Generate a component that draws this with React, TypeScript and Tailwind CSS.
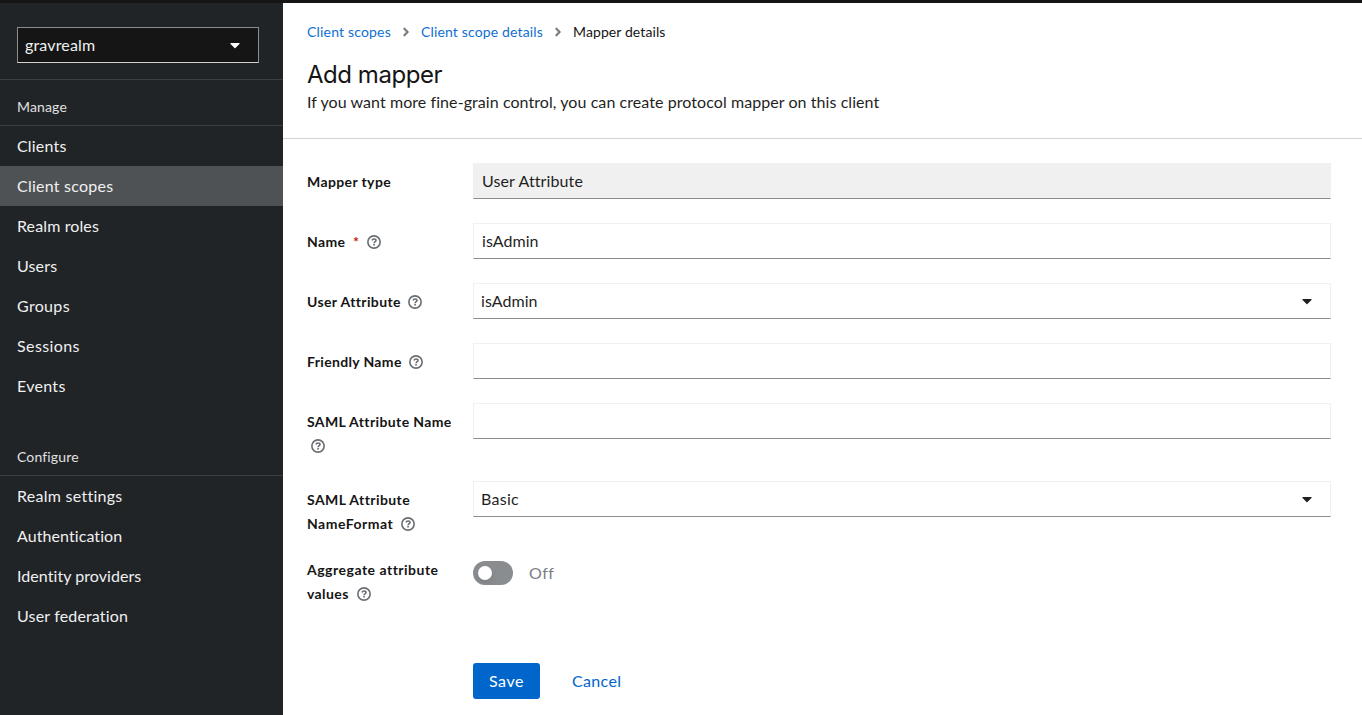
import type { ReactNode } from "react";
import { FaAngleRight, FaCaretDown } from "react-icons/fa";

function HelpIcon({ className = "ml-[7px]" }: { className?: string }) {
  return (
    <svg
      viewBox="0 0 14 14"
      className={`${className} inline-block size-3.5 align-[-2px] text-[#6a6e73]`}
      fill="none"
      stroke="currentColor"
      aria-hidden="true"
    >
      <circle cx="7" cy="7" r="6.15" strokeWidth="1.6" />
      <path d="M5.05 5.5C5.3 4.3 6.1 3.95 7.05 3.95c1.1 0 1.95.6 1.95 1.5 0 1.2-1.75 1.2-1.85 2.5" strokeWidth="1.6" />
      <path d="M6.2 9.65h1.7" strokeWidth="1.7" />
    </svg>
  );
}

function NavHeading({ children, className }: { children: string; className: string }) {
  return (
    <h2
      className={`flex h-[46px] items-start border-b border-[#3c3f42] pt-4 pl-[17px] text-sm leading-[21px] text-[#e0e0e0] ${className}`}
    >
      {children}
    </h2>
  );
}

function NavItem({ children, className, active }: { children: string; className: string; active?: boolean }) {
  return (
    <li
      className={`flex h-10 items-center pl-[17px] text-base leading-6 text-[#f0f0f0] ${active ? "bg-[#4f5255]" : ""} ${className}`}
    >
      <span className="pb-px">{children}</span>
    </li>
  );
}

const labelText = "w-[166px] shrink-0 text-sm leading-6 font-bold text-[#151515]";

function Field({ label, children, className = "h-9" }: { label: ReactNode; children: ReactNode; className?: string }) {
  return (
    <div className={`flex ${className}`}>
      <div className={`${labelText} pt-[7px]`}>{label}</div>
      <div className="min-w-0 flex-1">{children}</div>
    </div>
  );
}

const control =
  "flex h-9 items-center border border-[#f0f0f0] border-b-[#8a8d90] text-base leading-6 text-[#1f1f1f]";

export default function App() {
  return (
    <div className="flex h-[715px] flex-col overflow-hidden bg-white font-['Lato',sans-serif]">
      <div className="h-[3px] shrink-0 bg-[#151515]" />
      <div className="flex min-h-0 flex-1">
        <nav className="w-[283px] shrink-0 bg-[#212427]">
          <div className="h-[77px] border-b border-[#3c3f42] pt-6 pl-[17px]">
            <button className="flex h-9 w-[242px] items-center justify-between border border-[#8a8d90] border-b-[#d2d2d2] bg-[#151515] pr-[15px] pl-[7px] text-base leading-6 tracking-[0.15px] text-[#f0f0f0]">
              <span className="pb-px">gravrealm</span>
              <FaCaretDown className="text-white" />
            </button>
          </div>

          <NavHeading className="tracking-[0.15px]">Manage</NavHeading>
          <ul>
            <NavItem className="tracking-[0.18px]">Clients</NavItem>
            <NavItem className="tracking-[0.24px]" active>Client scopes</NavItem>
            <NavItem className="tracking-[0.12px]">Realm roles</NavItem>
            <NavItem className="tracking-[0.15px]">Users</NavItem>
            <NavItem className="tracking-[0.33px]">Groups</NavItem>
            <NavItem className="tracking-[0.4px]">Sessions</NavItem>
            <NavItem className="tracking-[0.3px]">Events</NavItem>
          </ul>

          <NavHeading className="mt-6 tracking-[0.14px]">Configure</NavHeading>
          <ul>
            <NavItem className="tracking-[0.27px]">Realm settings</NavItem>
            <NavItem className="tracking-[0.08px]">Authentication</NavItem>
            <NavItem className="tracking-[0.06px]">Identity providers</NavItem>
            <NavItem className="tracking-[0.16px]">User federation</NavItem>
          </ul>
        </nav>

        <main className="min-w-0 flex-1">
          <header className="h-[136px] border-b border-[#d2d2d2] px-6 pt-[18px]">
            <div className="flex items-center text-sm leading-[21px]">
              <a className="w-[84px] whitespace-nowrap tracking-[0.18px] text-[#0f6fd0]">Client scopes</a>
              <FaAngleRight className="mx-[8px] size-3.5 text-[#7a7d82]" />
              <a className="w-[122px] whitespace-nowrap tracking-[0.15px] text-[#0f6fd0]">Client scope details</a>
              <FaAngleRight className="mx-[8px] size-3.5 text-[#7a7d82]" />
              <span className="tracking-[0.1px] text-[#151515]">Mapper details</span>
            </div>
            <h1 className="mt-[17px] font-['Inter',sans-serif] text-2xl leading-[31px] tracking-[-0.46px] text-[#151515]">
              Add mapper
            </h1>
            <p className="text-base leading-6 tracking-[0.068px] text-[#1f1f1f]">
              If you want more fine-grain control, you can create protocol mapper on this client
            </p>
          </header>

          <form className="flex flex-col gap-6 pt-6 pr-[31px] pl-6">
            <Field label={<span className="tracking-[0.38px]">Mapper type</span>}>
              <div className={`${control} bg-[#f0f0f0] pl-2 tracking-[0.12px]`}>
                <span className="pb-px">User Attribute</span>
              </div>
            </Field>
            <Field
              label={
                <>
                  <span className="inline-block w-[46px] tracking-[0.38px]">Name</span>
                  <span className="inline-block w-[7px] text-[#c9190b]">*</span>
                  <HelpIcon />
                </>
              }
            >
              <div className={`${control} pl-2 tracking-[0.04px]`}>
                <span className="pb-px">isAdmin</span>
              </div>
            </Field>
            <Field label={<><span className="inline-block w-[94px] tracking-[0.38px]">User Attribute</span><HelpIcon /></>}>
              <div className={`${control} justify-between pr-[15px] pl-[7px] tracking-[0.04px]`}>
                <span className="pb-px">isAdmin</span>
                <FaCaretDown />
              </div>
            </Field>
            <Field label={<><span className="inline-block w-[95px] tracking-[0.34px]">Friendly Name</span><HelpIcon /></>}>
              <div className={control} />
            </Field>
            <Field
              className="h-[54px]"
              label={<><span className="tracking-[0.38px]">SAML Attribute Name</span><br /><HelpIcon className="ml-1" /></>}
            >
              <div className={control} />
            </Field>
            <Field
              className="h-[54px]"
              label={
                <>
                  <span className="tracking-[0.42px]">SAML Attribute</span>
                  <br />
                  <span className="inline-block w-[87px] tracking-[0.5px]">NameFormat</span>
                  <HelpIcon />
                </>
              }
            >
              <div className={`${control} justify-between pr-[15px] pl-[7px] tracking-[0.28px]`}>
                <span className="pb-px">Basic</span>
                <FaCaretDown />
              </div>
            </Field>
            <div className="flex h-12">
              <div className={`${labelText} -mt-px`}>
                <span className="tracking-[0.5px]">Aggregate attribute</span>
                <br />
                <span className="inline-block w-[43px] tracking-[0.4px]">values</span>
                <HelpIcon />
              </div>
              <div className="mt-0.5 flex h-6 items-center">
                <div className="flex h-6 w-10 items-center rounded-full bg-[#8a8d90] pl-[5px]">
                  <div className="size-3.5 rounded-full bg-white shadow-md" />
                </div>
                <span className="ml-4 text-base leading-6 tracking-[0.5px] text-[#7a7d82]">Off</span>
              </div>
            </div>
            <div className="mt-8 flex items-center pl-[166px] text-base leading-6">
              <button type="button" className="h-9 w-[67px] rounded-[3px] bg-[#0066cc] tracking-[0.55px] text-white">
                Save
              </button>
              <button type="button" className="ml-8 tracking-[0.33px] text-[#0066cc]">
                Cancel
              </button>
            </div>
          </form>
        </main>
      </div>
    </div>
  );
}
